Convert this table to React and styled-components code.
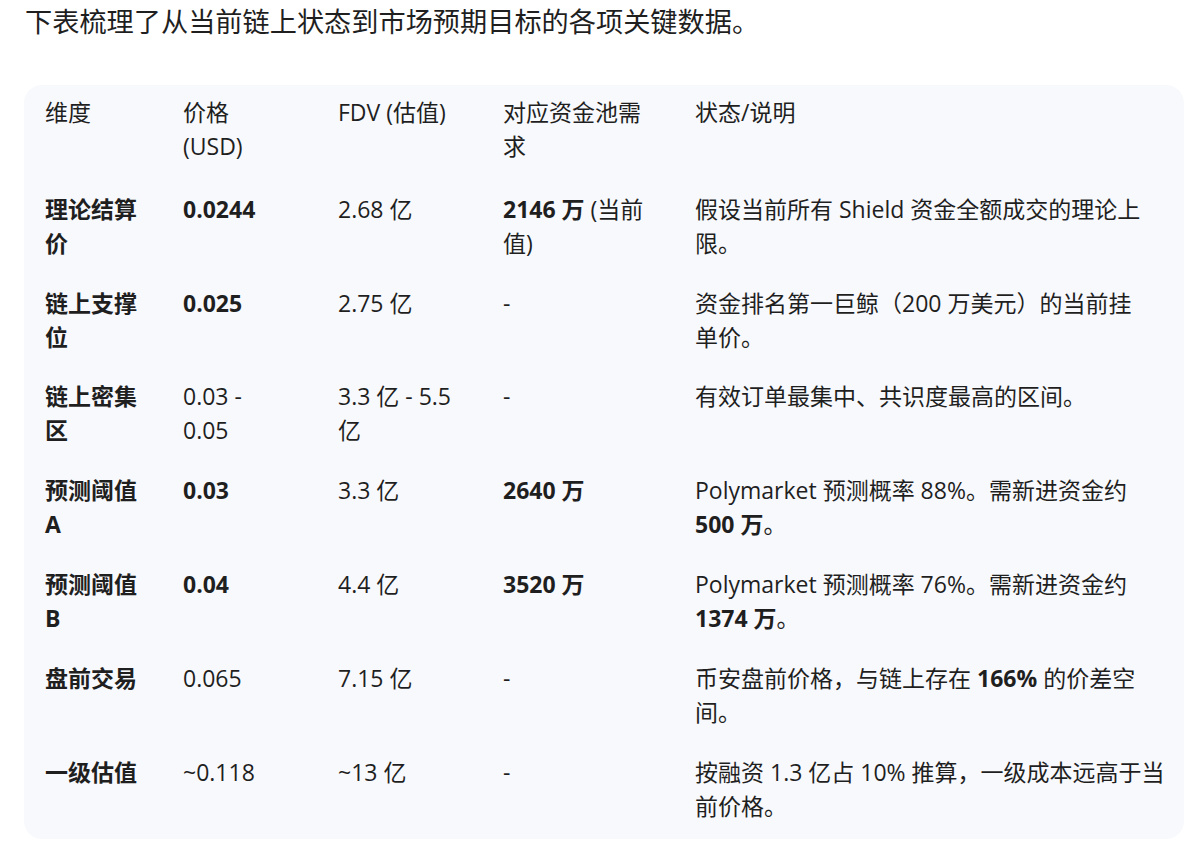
import React from 'react'
import styled, { createGlobalStyle } from 'styled-components'

const GlobalStyle = createGlobalStyle`
  html, body {
    margin: 0;
    padding: 0;
    background: #ffffff;
  }
  body {
    font-family: "Open Sans", "Noto Sans CJK SC", sans-serif;
    color: #1f1f1f;
  }
`

const Page = styled.div`
  padding: 2px 16px 0 24px;
`

const Intro = styled.p`
  margin: 0 0 0 1px;
  font-size: 27.2px;
  line-height: 40px;
`

const TableCard = styled.div`
  margin-top: 43px;
  background: #f8f9fc;
  border-radius: 18px;
  padding: 0 0 2px;
  overflow: hidden;
`

const Table = styled.table`
  width: 100%;
  border-collapse: collapse;
  table-layout: fixed;
  font-size: 23px;
  line-height: 33.9px;
`

const Col = styled.col`
  width: ${p => (p.$width ? `${p.$width}px` : 'auto')};
`

const HeadCell = styled.th`
  text-align: left;
  font-weight: 400;
  vertical-align: top;
  padding: 11px ${p => p.$gap}px 16px 0;

  &:first-child {
    padding-left: 21px;
  }
`

const Cell = styled.td`
  vertical-align: top;
  padding: 13px ${p => p.$gap}px 13px 0;
  font-weight: ${p => (p.$bold ? 700 : 400)};

  &:first-child {
    padding-left: 21px;
  }
`

const Strong = styled.b`
  font-weight: 700;
`

// keeps a two-character word on one line
const Word = styled.span`
  white-space: nowrap;
`

// width = full column, gap = space kept free on the right of the text
const columns = [
  { title: '维度', width: 159, gap: 32 },
  { title: '价格 (USD)', width: 155, gap: 52 },
  { title: 'FDV (估值)', width: 165, gap: 38 },
  { title: '对应资金池需求', width: 192, gap: 40 },
  { title: '状态/说明', gap: 18 },
]

const rows = [
  {
    name: '理论结算价',
    price: '0.0244',
    priceBold: true,
    fdv: '2.68 亿',
    pool: <><Strong>2146 万</Strong> (当前值)</>,
    note: '假设当前所有 Shield 资金全额成交的理论上限。',
  },
  {
    name: '链上支撑位',
    price: '0.025',
    priceBold: true,
    fdv: '2.75 亿',
    pool: '-',
    note: <>资金排名第一巨鲸（200 万美元）的当前挂<Word>单价</Word>。</>,
  },
  {
    name: '链上密集区',
    price: '0.03 - 0.05',
    fdv: '3.3 亿 - 5.5 亿',
    pool: '-',
    note: '有效订单最集中、共识度最高的区间。',
  },
  {
    name: '预测阈值 A',
    price: '0.03',
    priceBold: true,
    fdv: '3.3 亿',
    pool: <Strong>2640 万</Strong>,
    note: <>Polymarket 预测概率 88%。需新进资金约 <Strong>500 万</Strong>。</>,
  },
  {
    name: '预测阈值 B',
    price: '0.04',
    priceBold: true,
    fdv: '4.4 亿',
    pool: <Strong>3520 万</Strong>,
    note: <>Polymarket 预测概率 76%。需新进资金约 <Strong>1374 万</Strong>。</>,
  },
  {
    name: '盘前交易',
    price: '0.065',
    fdv: '7.15 亿',
    pool: '-',
    note: <>币安盘前价格，与链上存在 <Strong>166%</Strong> 的价差空间。</>,
  },
  {
    name: '一级估值',
    price: '~0.118',
    fdv: '~13 亿',
    pool: '-',
    note: '按融资 1.3 亿占 10% 推算，一级成本远高于当前价格。',
  },
]

export default function App() {
  const gap = i => columns[i].gap
  return (
    <>
      <GlobalStyle />
      <Page>
        <Intro>下表梳理了从当前链上状态到市场预期目标的各项关键数据。</Intro>
        <TableCard>
          <Table>
            <colgroup>
              {columns.map(c => (
                <Col key={c.title} $width={c.width} />
              ))}
            </colgroup>
            <thead>
              <tr>
                {columns.map(c => (
                  <HeadCell key={c.title} $gap={c.gap}>{c.title}</HeadCell>
                ))}
              </tr>
            </thead>
            <tbody>
              {rows.map(r => (
                <tr key={r.name}>
                  <Cell $gap={gap(0)} $bold>{r.name}</Cell>
                  <Cell $gap={gap(1)} $bold={r.priceBold}>{r.price}</Cell>
                  <Cell $gap={gap(2)}>{r.fdv}</Cell>
                  <Cell $gap={gap(3)}>{r.pool}</Cell>
                  <Cell $gap={gap(4)}>{r.note}</Cell>
                </tr>
              ))}
            </tbody>
          </Table>
        </TableCard>
      </Page>
    </>
  )
}
